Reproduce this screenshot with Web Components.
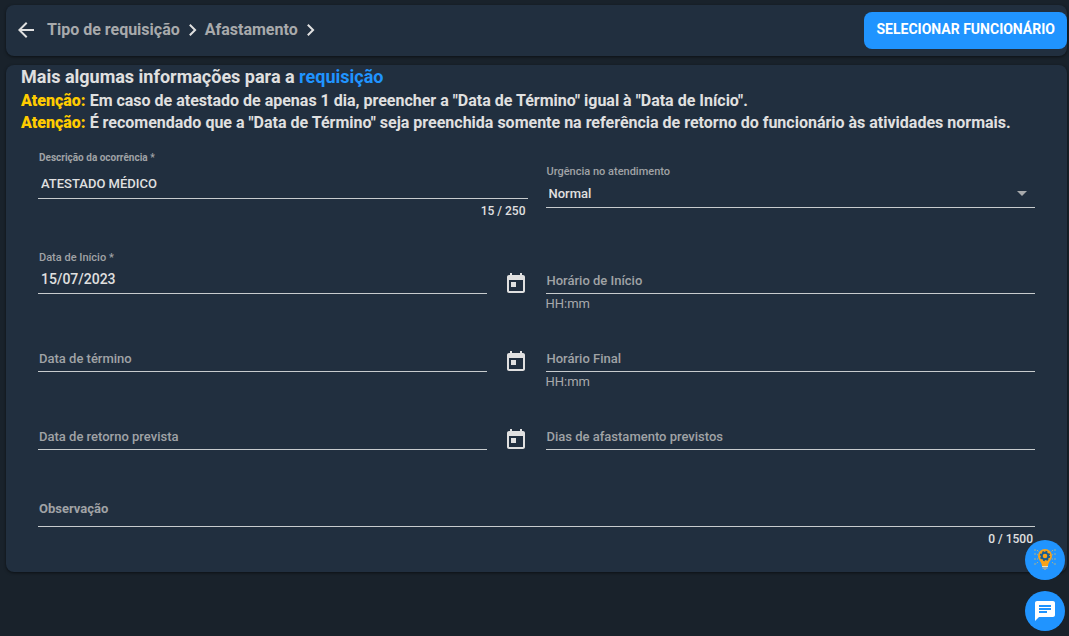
<!DOCTYPE html>
<html lang="pt-BR">
<head>
<meta charset="utf-8">
<meta name="viewport" content="width=device-width, initial-scale=1">
<title>Afastamento</title>
<style>
  body { margin: 0; background: #19222b; color: #e0e0e0; font-family: Roboto, "Liberation Sans", sans-serif; }
</style>
</head>
<body>
<request-page></request-page>
<script>
const define = (name, html, setup) => {
  const template = document.createElement('template');
  template.innerHTML = html;
  customElements.define(name, class extends HTMLElement {
    constructor() {
      super();
      this.attachShadow({ mode: 'open' }).append(template.content.cloneNode(true));
    }
    connectedCallback() { if (setup) setup(this, this.shadowRoot); }
  });
};

define('crumb-bar', `
  <style>
    :host { display: flex; align-items: center; justify-content: space-between; height: 51px; background: #212f3f; border-radius: 8px; box-shadow: 0 1px 3px #0008; }
    nav { display: flex; align-items: center; padding: 0 0 2px 8px; }
    a { color: #a8aaac; font-size: 16px; line-height: 24px; font-weight: 700; text-decoration: none; }
    a.back { display: flex; margin-right: 9px; color: #e0e0e0; }
    svg { display: block; }
  </style>
  <nav aria-label="Navegação">
    <a class="back" href="#" aria-label="Voltar"><svg width="24" height="24" viewBox="0 0 24 24" fill="currentColor"><path d="M20 11H7.83l5.59-5.59L12 4l-8 8 8 8 1.41-1.41L7.83 13H20v-2z"/></svg></a>
    <a href="#">Tipo de requisição</a>
    <svg width="25" height="24" viewBox="0 0 24 24" fill="#e0e0e0"><path d="M10 6L8.59 7.41 13.17 12l-4.58 4.59L10 18l6-6z"/></svg>
    <a href="#">Afastamento</a>
    <svg width="25" height="24" viewBox="0 0 24 24" fill="#e0e0e0"><path d="M10 6L8.59 7.41 13.17 12l-4.58 4.59L10 18l6-6z"/></svg>
  </nav>
  <slot></slot>`);

define('action-button', `
  <style>
    :host { display: block; }
    button { display: block; height: 37px; padding: 0 12px 3px; border: 0; border-radius: 8px; background: #2094ff; color: #fff; font: 700 14px/20px Roboto, sans-serif; cursor: pointer; white-space: nowrap; }
  </style>
  <button type="button"><slot></slot></button>`);

define('notice-line', `
  <style>
    :host { display: block; font-size: 16px; line-height: 22px; font-weight: 700; }
    strong { color: #ffcc00; }
  </style>
  <strong>Atenção:</strong> <slot></slot>`);

define('form-field', `
  <style>
    :host { display: block; flex: 1; min-width: 0; }
    .field { display: grid; grid-template-rows: 16px 28px; border-bottom: 1px solid #c8ccce; }
    label { grid-area: 1 / 1; padding-left: 1px; font-size: 11px; line-height: 18px; font-weight: 500; color: #a0a3a6; }
    .control { grid-area: 2 / 1; width: 100%; box-sizing: border-box; margin: 0; padding: 2px 2px 0 3px; border: 0; outline: 0; background: none; color: #e0e0e0; font: 500 13px/26px Roboto, sans-serif; appearance: none; resize: none; overflow: hidden; border-radius: 0; }
    .empty label { grid-area: 2 / 1; padding: 2px 1px 0; font-size: 13px; line-height: 28px; height: 26px; }
    .foot { display: block; padding-top: 1px; font-size: 13px; line-height: 17px; color: #a8aaac; }
    .foot:empty { display: none; }
    .foot.count { padding: 4px 2px 0; text-align: right; font-size: 12px; line-height: 16px; font-weight: 500; color: #e0e0e0; }
    svg { display: none; grid-area: 2 / 1; justify-self: end; align-self: center; margin-right: 8px; pointer-events: none; }
    .select svg { display: block; }
    :host([strong]) label { font-weight: 700; }
    :host([strong]) .field:not(.empty) label { font-size: 10px; }
    :host([size="tall"]) .field { grid-template-rows: 16px 33px; }
    :host([size="tall"]) .control { padding-top: 5px; }
    :host([kind="date"]) .control { padding-top: 0; font-size: 14px; }
    :host([kind="textarea"]) .field { grid-template-rows: 15px 28px; }
    :host([kind="textarea"]) .empty label { padding-top: 0; line-height: 22px; }
  </style>
  <div class="field">
    <label for="control"></label>
    <svg width="10" height="5" viewBox="0 0 10 5" fill="#a8aaac"><path d="M0 0h10L5 5z"/></svg>
  </div>
  <span class="foot"></span>`, (host, root) => {
    const kind = host.getAttribute('kind') || 'text';
    const value = host.getAttribute('value') || '';
    const tag = kind === 'select' || kind === 'textarea' ? kind : 'input';
    const control = document.createElement(tag);
    control.id = 'control';
    control.className = 'control';
    if (tag === 'select') control.append(new Option(value));
    else control.value = value;
    const field = root.querySelector('.field');
    const label = root.querySelector('label');
    const foot = root.querySelector('.foot');
    label.textContent = host.getAttribute('label');
    label.before(control);
    field.classList.toggle('select', tag === 'select');
    const max = host.getAttribute('max');
    if (max) { control.maxLength = +max; foot.classList.add('count'); }
    const update = () => {
      field.classList.toggle('empty', !control.value);
      foot.textContent = max ? control.value.length + ' / ' + max : host.getAttribute('hint') || '';
    };
    control.addEventListener('input', update);
    update();
  });

define('date-field', `
  <style>
    :host { display: flex; align-items: flex-start; gap: 17px; min-width: 0; }
    button { margin-top: 22px; padding: 0; border: 0; background: none; color: #e0e0e0; cursor: pointer; }
    svg { display: block; }
  </style>
  <button type="button" aria-label="Abrir calendário"><svg width="24" height="24" viewBox="0 0 24 24" fill="currentColor"><path d="M19 4h-1V2h-2v2H8V2H6v2H5c-1.100 0-2 .9-2 2v14c0 1.100.9 2 2 2h14c1.100 0 2-.9 2-2V6c0-1.100-.9-2-2-2zm0 16H5V9h14v11zM7 11h5v5H7z"/></svg></button>`,
  (host, root) => {
    const field = document.createElement('form-field');
    field.setAttribute('kind', 'date');
    for (const name of ['label', 'value']) if (host.hasAttribute(name)) field.setAttribute(name, host.getAttribute(name));
    root.querySelector('button').before(field);
  });

define('form-row', `
  <style>
    :host { display: grid; grid-template-columns: 1fr 1fr; column-gap: 18px; align-items: start; min-height: 78px; }
    :host([lead]) { min-height: 100px; }
    :host([full]) { grid-template-columns: 1fr; min-height: 0; }
    :host([lead]) ::slotted(:last-child) { margin-top: 14px; }
  </style>
  <slot></slot>`);

define('round-button', `
  <style>
    :host { display: block; }
    button { display: grid; place-items: center; width: 40px; height: 40px; padding: 0; border: 0; border-radius: 50%; background: #2094ff; color: #fff; cursor: pointer; }
  </style>
  <button type="button"><slot></slot></button>`, (host, root) => {
    root.querySelector('button').setAttribute('aria-label', host.getAttribute('label'));
  });

define('request-page', `
  <style>
    :host { display: block; padding: 5px 2px 5px 6px; }
    main { margin-top: 9px; padding: 0 0 25px; background: #212f3f; border-radius: 8px; box-shadow: 0 1px 3px #0008; }
    header { padding: 0 15px; }
    h1 { margin: 0 0 1px; font-size: 18px; line-height: 24px; font-weight: 700; }
    h1 span { color: #2094ff; }
    form { padding: 15px 32px 0; }
    aside { position: fixed; right: 4px; bottom: 5px; display: grid; gap: 11px; }
    svg { display: block; }
  </style>
  <crumb-bar><action-button>SELECIONAR FUNCIONÁRIO</action-button></crumb-bar>
  <main>
    <header>
      <h1>Mais algumas informações para a <span>requisição</span></h1>
      <notice-line>Em caso de atestado de apenas 1 dia, preencher a "Data de Término" igual à "Data de Início".</notice-line>
      <notice-line>É recomendado que a "Data de Término" seja preenchida somente na referência de retorno do funcionário às atividades normais.</notice-line>
    </header>
    <form>
      <form-row lead>
        <form-field strong size="tall" label="Descrição da ocorrência *" value="ATESTADO MÉDICO" max="250"></form-field>
        <form-field kind="select" label="Urgência no atendimento" value="Normal"></form-field>
      </form-row>
      <form-row>
        <date-field label="Data de Início *" value="15/07/2023"></date-field>
        <form-field label="Horário de Início" hint="HH:mm"></form-field>
      </form-row>
      <form-row>
        <date-field label="Data de término"></date-field>
        <form-field label="Horário Final" hint="HH:mm"></form-field>
      </form-row>
      <form-row>
        <date-field label="Data de retorno prevista"></date-field>
        <form-field label="Dias de afastamento previstos"></form-field>
      </form-row>
      <form-row full>
        <form-field strong kind="textarea" label="Observação" max="1500"></form-field>
      </form-row>
    </form>
  </main>
  <aside>
    <round-button label="Dicas"><svg width="24" height="24" viewBox="0 0 24 24">
      <g fill="none" stroke="#a5b08e" stroke-width="1"><path d="M1 2h3l2 2M1 6h2l2 1M1 11h4M1 16h2l2-2M23 2h-3l-2 2M23 6h-2l-2 1M23 11h-4M23 16h-2l-2-2" stroke-dasharray="2 1"/></g>
      <path d="M12 1a7 7 0 0 0-7 7c0 4 3.500 5 4 10h6c.5-5 4-6 4-10a7 7 0 0 0-7-7z" fill="#f9a31a"/>
      <circle cx="12" cy="8" r="3.300" fill="none" stroke="#185d91" stroke-width="2"/>
      <circle cx="12" cy="8" r="4.500" fill="none" stroke="#185d91" stroke-width="1.400" stroke-dasharray="1.800 1.734"/>
      <path d="M9 18h6v1H9z" fill="#e8dfc0"/><path d="M9.500 19h5v2h-5zM11 21h2v1h-2z" fill="#8aa6b4"/>
    </svg></round-button>
    <round-button label="Chat"><svg width="24" height="24" viewBox="0 0 24 24" fill="currentColor"><path d="M20 2H4c-1.100 0-1.990.9-1.990 2L2 22l4-4h14c1.100 0 2-.9 2-2V4c0-1.100-.9-2-2-2zM6 9h12v2H6V9zm8 5H6v-2h8v2zm4-6H6V6h12v2z"/></svg></round-button>
  </aside>`);
</script>
</body>
</html>
